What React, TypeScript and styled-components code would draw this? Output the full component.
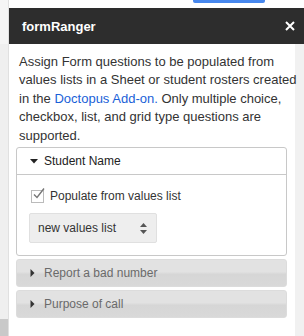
import React from "react";
import styled, { createGlobalStyle } from "styled-components";

const Global = createGlobalStyle`
  html, body {
    margin: 0;
    padding: 0;
    background: #fff;
    font-family: "Liberation Sans", Arial, sans-serif;
    overflow: hidden;
  }
`;

const Page = styled.div`
  display: flex;
  width: 304px;
  height: 336px;
`;

const LeftStrip = styled.div`
  width: 8px;
  display: flex;
  flex-direction: column;
  border-right: 1px solid #e0e0e0;
`;

const StripPart = styled.div<{ $h?: number; $bg: string }>`
  background: ${(p) => p.$bg};
  ${(p) => (p.$h ? `height: ${p.$h}px;` : "flex: 1;")}
`;

const Main = styled.div`
  flex: 1;
  display: flex;
  flex-direction: column;
`;

const TopBar = styled.div`
  height: 8px;
  display: flex;
  padding-left: 184px;
`;

const BlueButton = styled.div`
  width: 72px;
  height: 3px;
  background: #4787ed;
  border-radius: 0 0 2px 2px;
`;

const Header = styled.div`
  height: 36px;
  background: #2d2d2d;
  display: flex;
  align-items: center;
  justify-content: space-between;
  padding: 0 9px 0 13px;
  color: #fff;
  font-weight: bold;
  font-size: 13px;
`;

const Body = styled.div`
  flex: 1;
  display: flex;
  position: relative;
`;

const Content = styled.div`
  flex: 1;
  padding: 9px 8px 0 7px;
  position: relative;
  z-index: 1;
`;

const RightStrip = styled.div`
  width: 9px;
  background: #f1f1f1;
`;

const Intro = styled.p`
  margin: 0 -14px 2px 3px;
  font-size: 13px;
  line-height: 18.4px;
  color: #333;
`;

const Link = styled.a`
  color: #1a5fd8;
  text-decoration: none;
`;

const Section = styled.div<{ $open?: boolean }>`
  border: 1px solid ${(p) => (p.$open ? "#c8c8c8" : "#dcdcdc")};
  border-radius: 3px;
  margin-bottom: 3px;
  background: ${(p) =>
    p.$open
      ? "#fff"
      : "linear-gradient(#e2e2e2 0%, #e2e2e2 45%, #d6d6d6 55%, #d9d9d9 100%)"};
`;

const SectionHead = styled.div<{ $open?: boolean }>`
  height: 26px;
  display: flex;
  align-items: center;
  padding-left: 13px;
  font-size: 12px;
  color: ${(p) => (p.$open ? "#222" : "#6a6a6a")};
  border-bottom: ${(p) => (p.$open ? "1px solid #c8c8c8" : "none")};
`;

const Caret = styled.span`
  width: 14px;
  display: inline-flex;
  align-items: center;
`;

const SectionBody = styled.div`
  padding: 13px 12px 12px 12px;
`;

const CheckRow = styled.label`
  display: flex;
  align-items: center;
  font-size: 12px;
  color: #333;
  gap: 6px;
  height: 16px;
`;

const Box = styled.span`
  width: 11px;
  height: 11px;
  border: 1px solid #bbb;
  background: #fff;
  position: relative;
  margin-left: 2px;
`;

const Select = styled.div`
  margin-top: 9px;
  width: 128px;
  height: 30px;
  box-sizing: border-box;
  background: #eee;
  border: 1px solid #e0e0e0;
  border-radius: 2px;
  display: flex;
  align-items: center;
  justify-content: space-between;
  padding: 0 9px 0 8px;
  font-size: 12px;
  color: #333;
`;

function Down() {
  return (
    <svg width="8" height="5" viewBox="0 0 8 5">
      <path d="M0 0h8L4 4.5z" fill="#222" />
    </svg>
  );
}

function Right() {
  return (
    <svg width="5" height="8" viewBox="0 0 5 8">
      <path d="M0.5 0v8L4.5 4z" fill="#333" />
    </svg>
  );
}

export default function App() {
  return (
    <>
      <Global />
      <Page>
        <LeftStrip>
          <StripPart $h={44} $bg="#f5f5f5" />
          <StripPart $bg="#efefef" />
          <StripPart $h={17} $bg="#c9c9c9" />
        </LeftStrip>
        <Main>
          <TopBar>
            <BlueButton />
          </TopBar>
          <Header>
            <span>formRanger</span>
            <svg width="10" height="10" viewBox="0 0 10 10">
              <path d="M1 1L9 9M9 1L1 9" stroke="#fff" strokeWidth="2" />
            </svg>
          </Header>
          <Body>
            <Content>
              <Intro>
                Assign Form questions to be populated from values lists in a
                Sheet or student rosters created in the{" "}
                <Link>Doctopus Add-on.</Link> Only multiple choice, checkbox,
                list, and grid type questions are supported.
              </Intro>
              <Section $open>
                <SectionHead $open>
                  <Caret>
                    <Down />
                  </Caret>
                  Student Name
                </SectionHead>
                <SectionBody>
                  <CheckRow>
                    <Box>
                      <svg
                        width="14"
                        height="13"
                        viewBox="0 0 14 13"
                        style={{ position: "absolute", left: 0, top: -4 }}
                      >
                        <path
                          d="M2 7.5L5 10.5L12 1.5"
                          stroke="#777"
                          strokeWidth="1.4"
                          fill="none"
                        />
                      </svg>
                    </Box>
                    Populate from values list
                  </CheckRow>
                  <Select>
                    <span>new values list</span>
                    <svg width="7" height="11" viewBox="0 0 7 11">
                      <path d="M3.5 0L7 4H0zM3.5 11L7 7H0z" fill="#555" />
                    </svg>
                  </Select>
                </SectionBody>
              </Section>
              <Section>
                <SectionHead>
                  <Caret>
                    <Right />
                  </Caret>
                  Report a bad number
                </SectionHead>
              </Section>
              <Section>
                <SectionHead>
                  <Caret>
                    <Right />
                  </Caret>
                  Purpose of call
                </SectionHead>
              </Section>
            </Content>
            <RightStrip />
          </Body>
        </Main>
      </Page>
    </>
  );
}
